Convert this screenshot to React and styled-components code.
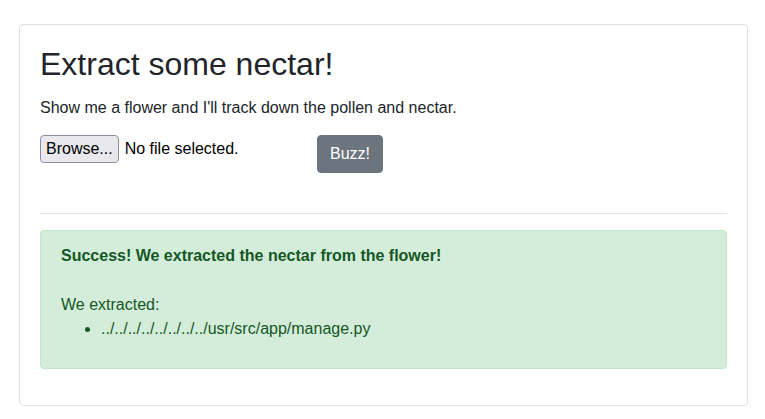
import React from 'react';
import styled, { createGlobalStyle } from 'styled-components';

const GlobalStyle = createGlobalStyle`
  body {
    margin: 0;
    background: #fff;
    font-family: "Liberation Sans", Arial, sans-serif;
    font-size: 16px;
    line-height: 1.5;
    color: #212529;
  }
`;

const Page = styled.div`
  padding: 24px 17px 14px 19px;
`;

const Card = styled.div`
  border: 1px solid rgba(0, 0, 0, 0.125);
  border-radius: 4px;
  padding: 20px;
`;

const Title = styled.h2`
  margin: 0 0 13px;
  font-size: 32px;
  font-weight: 400;
  line-height: 1.2;
`;

const Lead = styled.p`
  margin: 0 0 15px;
`;

const FormRow = styled.div`
  display: flex;
  align-items: flex-start;
  margin-bottom: 40px;
`;

const FilePicker = styled.div`
  display: flex;
  align-items: center;
  gap: 6px;
  width: 277px;
`;

const BrowseButton = styled.button`
  height: 28px;
  padding: 0 5px;
  font-family: inherit;
  font-size: 16px;
  color: #000;
  background: #e9e9ed;
  border: 1px solid #8f8f9d;
  border-radius: 4px;
`;

const FileName = styled.span`
  color: #000;
`;

const SubmitButton = styled.button`
  padding: 6px 12px;
  font-family: inherit;
  font-size: 16px;
  line-height: 24px;
  color: #fff;
  background: #6c757d;
  border: 1px solid #6c757d;
  border-radius: 4px;
`;

const Rule = styled.hr`
  margin: 16px 0;
  border: 0;
  border-top: 1px solid rgba(0, 0, 0, 0.1);
`;

const Alert = styled.div`
  margin-bottom: 16px;
  padding: 13px 20px 11px;
  color: #155724;
  background: #d4edda;
  border: 1px solid #c3e6cb;
  border-radius: 4px;
`;

const AlertTitle = styled.div`
  font-weight: 700;
  margin-bottom: 25px;
`;

const FileList = styled.ul`
  margin: 0 0 16px;
  padding-left: 40px;
`;

export default function App() {
  const extracted = ['../../../../../../../../usr/src/app/manage.py'];

  return (
    <Page>
      <GlobalStyle />
      <Card>
        <Title>Extract some nectar!</Title>
        <Lead>Show me a flower and I'll track down the pollen and nectar.</Lead>
        <FormRow>
          <FilePicker>
            <BrowseButton type="button">Browse...</BrowseButton>
            <FileName>No file selected.</FileName>
          </FilePicker>
          <SubmitButton type="button">Buzz!</SubmitButton>
        </FormRow>
        <Rule />
        <Alert>
          <AlertTitle>Success! We extracted the nectar from the flower!</AlertTitle>
          <div>We extracted:</div>
          <FileList>
            {extracted.map((f) => (
              <li key={f}>{f}</li>
            ))}
          </FileList>
        </Alert>
      </Card>
    </Page>
  );
}
